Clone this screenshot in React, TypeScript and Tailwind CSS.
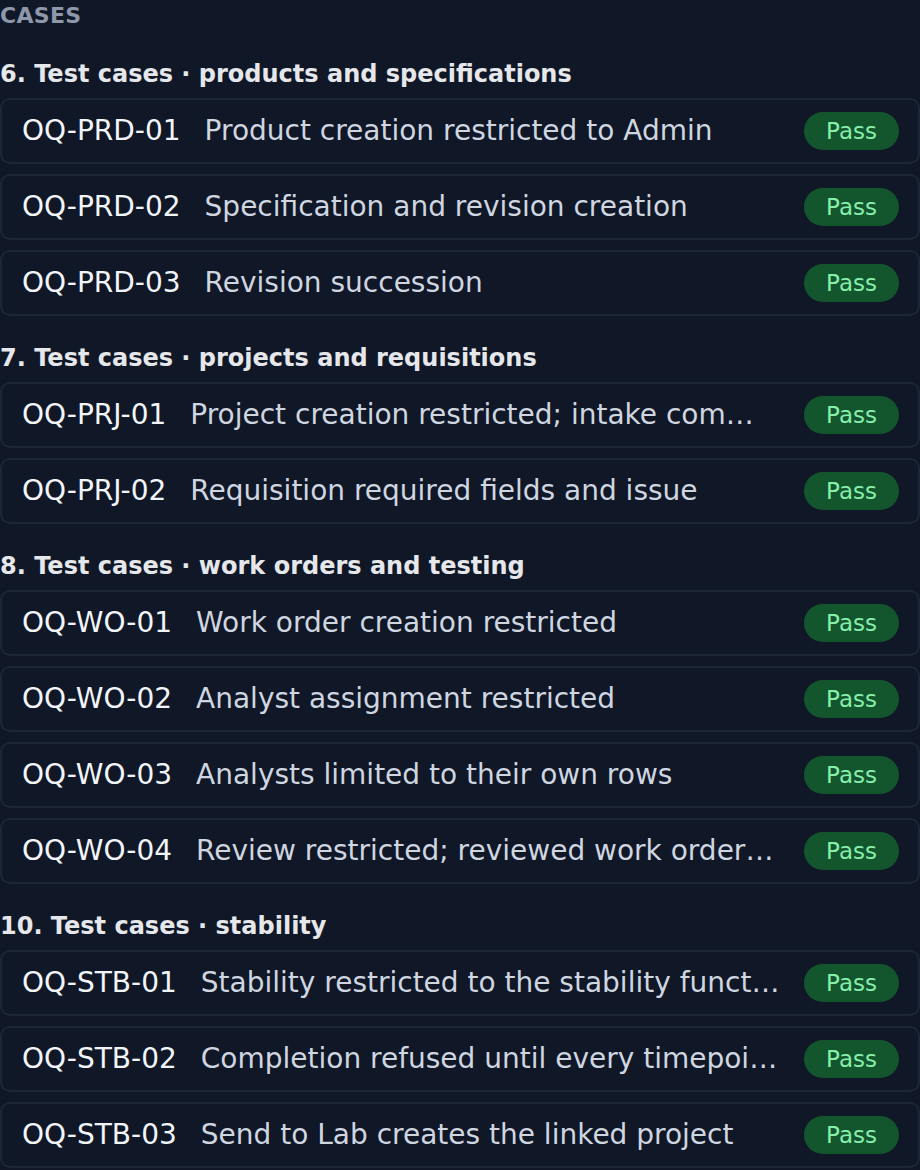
import React from "react";

type Row = { id: string; desc: string };
type Section = { title: string; rows: Row[] };

const sections: Section[] = [
  {
    title: "6. Test cases · products and specifications",
    rows: [
      { id: "OQ-PRD-01", desc: "Product creation restricted to Admin" },
      { id: "OQ-PRD-02", desc: "Specification and revision creation" },
      { id: "OQ-PRD-03", desc: "Revision succession" },
    ],
  },
  {
    title: "7. Test cases · projects and requisitions",
    rows: [
      { id: "OQ-PRJ-01", desc: "Project creation restricted; intake comments required" },
      { id: "OQ-PRJ-02", desc: "Requisition required fields and issue" },
    ],
  },
  {
    title: "8. Test cases · work orders and testing",
    rows: [
      { id: "OQ-WO-01", desc: "Work order creation restricted" },
      { id: "OQ-WO-02", desc: "Analyst assignment restricted" },
      { id: "OQ-WO-03", desc: "Analysts limited to their own rows" },
      { id: "OQ-WO-04", desc: "Review restricted; reviewed work orders are locked" },
    ],
  },
  {
    title: "10. Test cases · stability",
    rows: [
      { id: "OQ-STB-01", desc: "Stability restricted to the stability function" },
      { id: "OQ-STB-02", desc: "Completion refused until every timepoint is tested" },
      { id: "OQ-STB-03", desc: "Send to Lab creates the linked project" },
    ],
  },
];

export default function App() {
  return (
    <div
      className="min-h-screen w-[920px] bg-[#101726] flex flex-col gap-[26px]"
      style={{ fontFamily: "'DejaVu Sans', Verdana, sans-serif" }}
    >
      <div className="h-[32px] leading-[32px] text-[22px] font-bold uppercase tracking-[0.3px] text-[#8e98aa]">
        Cases
      </div>
      {sections.map((s) => (
        <div key={s.title} className="flex flex-col">
          <h2 className="h-[32px] leading-[32px] text-[24px] font-bold text-[#e5e7eb] mb-[8px] whitespace-nowrap">
            {s.title}
          </h2>
          <div className="flex flex-col gap-[10px]">
            {s.rows.map((r) => (
              <div
                key={r.id}
                className="h-[66px] flex items-center gap-6 rounded-[10px] border-2 border-[#1d2637] bg-[#101726] pl-[20px] pr-[19px]"
              >
                <span className="shrink-0 text-[28px] leading-[36px] text-[#f1f5f9] whitespace-nowrap">
                  {r.id}
                </span>
                <span className="flex-1 min-w-0 mr-[0.5px] truncate text-[28px] leading-[36px] text-[#cfd6e0]">
                  {r.desc}
                </span>
                <span className="shrink-0 rounded-full bg-[#13562d] px-[22px] py-[4px] text-[23px] leading-[30px] text-[#86efac]">
                  Pass
                </span>
              </div>
            ))}
          </div>
        </div>
      ))}
    </div>
  );
}
